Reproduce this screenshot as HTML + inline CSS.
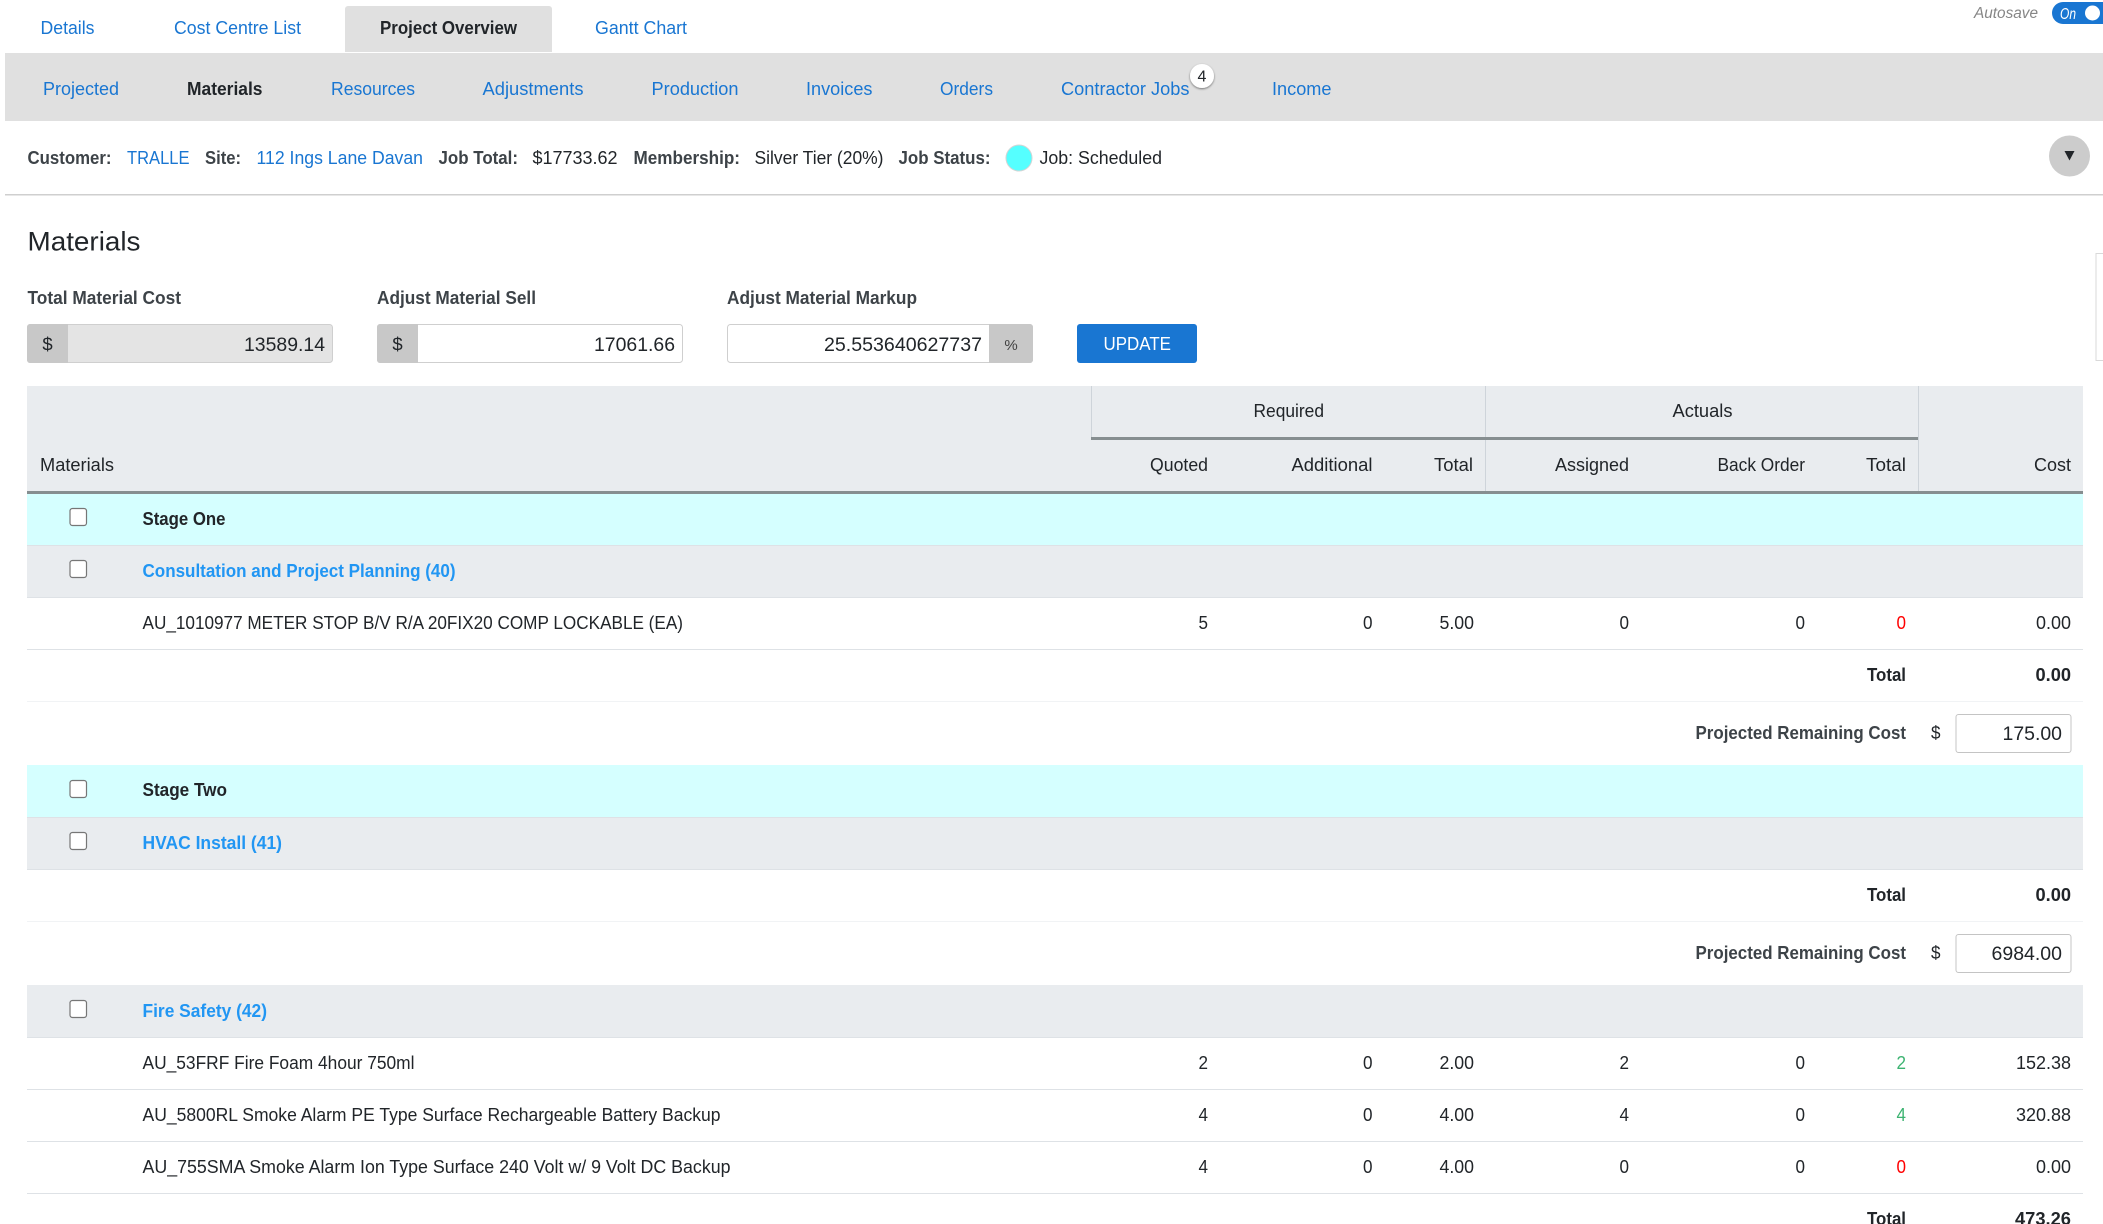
<!DOCTYPE html>
<html lang="en">
<head>
<meta charset="utf-8">
<title>Materials</title>
<style>
html,body{margin:0;padding:0;width:2103px;height:1224px;overflow:hidden;background:#fff}
svg{display:block}
text{font-family:"Liberation Sans",Arial,sans-serif;font-size:18.5px;fill:#212529}
.l{fill:#1976d2}
.g{fill:#2196f3;font-weight:bold}
.b{font-weight:bold}
.m{font-weight:bold;fill:#3d4348}
.e{text-anchor:end}
.c{text-anchor:middle}
</style>
</head>
<body>
<svg xmlns="http://www.w3.org/2000/svg" width="2103" height="1224" viewBox="0 0 2103 1224">
<defs>
<filter id="sh" x="-30%" y="-30%" width="160%" height="170%"><feDropShadow dx="0" dy="1" stdDeviation="1" flood-color="#000" flood-opacity=".5"/></filter>
</defs>
<!-- top tabs -->
<path d="M345 52V9a3 3 0 0 1 3-3h201a3 3 0 0 1 3 3v43z" fill="#e0e0e0"/>
<text x="40.5" y="34" class="l" textLength="54" lengthAdjust="spacingAndGlyphs">Details</text>
<text x="174" y="34" class="l" textLength="127" lengthAdjust="spacingAndGlyphs">Cost Centre List</text>
<text x="380" y="34" class="b" fill="#111" textLength="137" lengthAdjust="spacingAndGlyphs">Project Overview</text>
<text x="595" y="34" class="l" textLength="92" lengthAdjust="spacingAndGlyphs">Gantt Chart</text>
<!-- autosave -->
<text x="1974" y="18" style="font-size:15.5px;font-style:italic;fill:#868686" textLength="64" lengthAdjust="spacingAndGlyphs">Autosave</text>
<rect x="2052" y="2" width="70" height="22" rx="11" fill="#1976d2"/>
<text x="2060" y="19" style="font-size:16px;font-style:italic;fill:#fff" textLength="16" lengthAdjust="spacingAndGlyphs">On</text>
<circle cx="2092.5" cy="13" r="7.5" fill="#fff"/>
<!-- sub nav -->
<rect x="5" y="53" width="2098" height="68" fill="#e0e0e0"/>
<text x="43" y="95" class="l" textLength="76" lengthAdjust="spacingAndGlyphs">Projected</text>
<text x="187" y="95" class="b" textLength="75.5" lengthAdjust="spacingAndGlyphs">Materials</text>
<text x="331" y="95" class="l" textLength="84" lengthAdjust="spacingAndGlyphs">Resources</text>
<text x="482.5" y="95" class="l" textLength="101" lengthAdjust="spacingAndGlyphs">Adjustments</text>
<text x="651.5" y="95" class="l" textLength="87" lengthAdjust="spacingAndGlyphs">Production</text>
<text x="806" y="95" class="l" textLength="66.5" lengthAdjust="spacingAndGlyphs">Invoices</text>
<text x="940" y="95" class="l" textLength="53" lengthAdjust="spacingAndGlyphs">Orders</text>
<text x="1061" y="95" class="l" textLength="128.5" lengthAdjust="spacingAndGlyphs">Contractor Jobs</text>
<circle cx="1202" cy="76" r="12" fill="#fff" filter="url(#sh)"/>
<text x="1202" y="81.5" class="c" style="font-size:16px">4</text>
<text x="1272" y="95" class="l" textLength="59.5" lengthAdjust="spacingAndGlyphs">Income</text>
<!-- info line -->
<text x="27.5" y="164" class="m" textLength="84" lengthAdjust="spacingAndGlyphs">Customer:</text>
<text x="127" y="164" class="l" textLength="62.5" lengthAdjust="spacingAndGlyphs">TRALLE</text>
<text x="205" y="164" class="m" textLength="36" lengthAdjust="spacingAndGlyphs">Site:</text>
<text x="256.5" y="164" class="l" textLength="166.5" lengthAdjust="spacingAndGlyphs">112 Ings Lane Davan</text>
<text x="438.5" y="164" class="m" textLength="79.5" lengthAdjust="spacingAndGlyphs">Job Total:</text>
<text x="532.5" y="164" textLength="85" lengthAdjust="spacingAndGlyphs">$17733.62</text>
<text x="633.5" y="164" class="m" textLength="106.5" lengthAdjust="spacingAndGlyphs">Membership:</text>
<text x="754.5" y="164" textLength="129" lengthAdjust="spacingAndGlyphs">Silver Tier (20%)</text>
<text x="898.5" y="164" class="m" textLength="92" lengthAdjust="spacingAndGlyphs">Job Status:</text>
<circle cx="1019" cy="158" r="13" fill="#55ffff" stroke="#d4d4d4" stroke-width="1"/>
<text x="1039.5" y="164" textLength="122.5" lengthAdjust="spacingAndGlyphs">Job: Scheduled</text>
<circle cx="2069.5" cy="156" r="20.5" fill="#cccccc"/>
<path d="M2064.5 151h10l-5 9.5z" fill="#212529"/>
<rect x="5" y="194" width="2098" height="1.5" fill="#cfcfcf"/>
<!-- title -->
<text x="27.5" y="250.5" style="font-size:26.5px" textLength="113" lengthAdjust="spacingAndGlyphs">Materials</text>
<!-- right box -->
<rect x="2096" y="253.5" width="12" height="107" fill="#fff" stroke="#d9d9d9"/>
<!-- labels -->
<text x="27.5" y="304" class="m" textLength="153.5" lengthAdjust="spacingAndGlyphs">Total Material Cost</text>
<text x="377" y="304" class="m" textLength="159" lengthAdjust="spacingAndGlyphs">Adjust Material Sell</text>
<text x="727" y="304" class="m" textLength="190" lengthAdjust="spacingAndGlyphs">Adjust Material Markup</text>
<!-- inputs -->
<rect x="27.5" y="324.5" width="305" height="38" rx="3" fill="#e4e4e4" stroke="#cfcfcf"/>
<path d="M68 324H30a3 3 0 0 0-3 3v33a3 3 0 0 0 3 3h38z" fill="#c8c8c8"/>
<text x="47.5" y="350.5" class="c">$</text>
<text x="325" y="351" class="e" style="font-size:19px" textLength="81" lengthAdjust="spacingAndGlyphs">13589.14</text>
<rect x="377.5" y="324.5" width="305" height="38" rx="3" fill="#fff" stroke="#cfcfcf"/>
<path d="M418 324H380a3 3 0 0 0-3 3v33a3 3 0 0 0 3 3h38z" fill="#c8c8c8"/>
<text x="397.5" y="350.5" class="c">$</text>
<text x="675" y="351" class="e" style="font-size:19px" textLength="81" lengthAdjust="spacingAndGlyphs">17061.66</text>
<rect x="727.5" y="324.5" width="305" height="38" rx="3" fill="#fff" stroke="#cfcfcf"/>
<path d="M989 324h41a3 3 0 0 1 3 3v33a3 3 0 0 1-3 3h-41z" fill="#c8c8c8"/>
<text x="1011" y="350" class="c" style="font-size:15px;fill:#444">%</text>
<text x="982" y="351" class="e" style="font-size:19px" textLength="158" lengthAdjust="spacingAndGlyphs">25.553640627737</text>
<rect x="1077" y="324" width="120" height="39" rx="3" fill="#1976d2"/>
<text x="1103.5" y="350" style="fill:#fff;font-size:18px" textLength="67.5" lengthAdjust="spacingAndGlyphs">UPDATE</text>
<!-- table header -->
<rect x="27" y="386" width="2056" height="105" fill="#e9ecef"/>
<rect x="1091" y="386" width="1" height="51" fill="#ced4da"/>
<rect x="1485" y="386" width="1" height="105" fill="#ced4da"/>
<rect x="1918" y="386" width="1" height="105" fill="#ced4da"/>
<rect x="1091" y="437" width="827" height="3" fill="#868e90"/>
<rect x="27" y="491" width="2056" height="3" fill="#868e90"/>
<text x="1253.5" y="417" textLength="70.5" lengthAdjust="spacingAndGlyphs">Required</text>
<text x="1672.5" y="417" textLength="60" lengthAdjust="spacingAndGlyphs">Actuals</text>
<text x="40" y="471" textLength="74" lengthAdjust="spacingAndGlyphs">Materials</text>
<text x="1208" y="471" class="e" textLength="58" lengthAdjust="spacingAndGlyphs">Quoted</text>
<text x="1372.5" y="471" class="e" textLength="81" lengthAdjust="spacingAndGlyphs">Additional</text>
<text x="1473" y="471" class="e" textLength="39" lengthAdjust="spacingAndGlyphs">Total</text>
<text x="1629" y="471" class="e" textLength="74" lengthAdjust="spacingAndGlyphs">Assigned</text>
<text x="1805" y="471" class="e" textLength="87.5" lengthAdjust="spacingAndGlyphs">Back Order</text>
<text x="1906" y="471" class="e" textLength="40" lengthAdjust="spacingAndGlyphs">Total</text>
<text x="2071" y="471" class="e" textLength="37" lengthAdjust="spacingAndGlyphs">Cost</text>
<!-- row backgrounds -->
<rect x="27" y="494" width="2056" height="51" fill="#d5ffff"/>
<rect x="27" y="545" width="2056" height="1" fill="#dee2e6"/>
<rect x="27" y="546" width="2056" height="51" fill="#e9ecef"/>
<rect x="27" y="597" width="2056" height="1" fill="#dee2e6"/>
<rect x="27" y="649" width="2056" height="1" fill="#dee2e6"/>
<rect x="27" y="701" width="2056" height="1" fill="#f1f3f5"/>
<rect x="27" y="765" width="2056" height="52" fill="#d5ffff"/>
<rect x="27" y="817" width="2056" height="1" fill="#dee2e6"/>
<rect x="27" y="818" width="2056" height="51" fill="#e9ecef"/>
<rect x="27" y="869" width="2056" height="1" fill="#dee2e6"/>
<rect x="27" y="921" width="2056" height="1" fill="#f1f3f5"/>
<rect x="27" y="985" width="2056" height="52" fill="#e9ecef"/>
<rect x="27" y="1037" width="2056" height="1" fill="#dee2e6"/>
<rect x="27" y="1089" width="2056" height="1" fill="#dee2e6"/>
<rect x="27" y="1141" width="2056" height="1" fill="#dee2e6"/>
<rect x="27" y="1193" width="2056" height="1" fill="#dee2e6"/>
<!-- checkboxes -->
<g fill="#fff" stroke="#767676" stroke-width="1.2">
<rect x="70" y="508.5" width="16.5" height="17" rx="2.5"/>
<rect x="70" y="560.5" width="16.5" height="17" rx="2.5"/>
<rect x="70" y="780.5" width="16.5" height="17" rx="2.5"/>
<rect x="70" y="832.5" width="16.5" height="17" rx="2.5"/>
<rect x="70" y="1000.5" width="16.5" height="17" rx="2.5"/>
</g>
<!-- row labels -->
<text x="142.5" y="525" class="b" textLength="83" lengthAdjust="spacingAndGlyphs">Stage One</text>
<text x="142.5" y="577" class="g" textLength="313" lengthAdjust="spacingAndGlyphs">Consultation and Project Planning (40)</text>
<text x="142.5" y="629" textLength="540.5" lengthAdjust="spacingAndGlyphs">AU_1010977 METER STOP B/V R/A 20FIX20 COMP LOCKABLE (EA)</text>
<text x="142.5" y="796" class="b" textLength="84.5" lengthAdjust="spacingAndGlyphs">Stage Two</text>
<text x="142.5" y="849" class="g" textLength="139.5" lengthAdjust="spacingAndGlyphs">HVAC Install (41)</text>
<text x="142.5" y="1017" class="g" textLength="124.5" lengthAdjust="spacingAndGlyphs">Fire Safety (42)</text>
<text x="142.5" y="1069" textLength="272" lengthAdjust="spacingAndGlyphs">AU_53FRF Fire Foam 4hour 750ml</text>
<text x="142.5" y="1121" textLength="578" lengthAdjust="spacingAndGlyphs">AU_5800RL Smoke Alarm PE Type Surface Rechargeable Battery Backup</text>
<text x="142.5" y="1173" textLength="588" lengthAdjust="spacingAndGlyphs">AU_755SMA Smoke Alarm Ion Type Surface 240 Volt w/ 9 Volt DC Backup</text>
<!-- numbers -->
<g>
<text x="1208" y="629" class="e" textLength="9.5" lengthAdjust="spacingAndGlyphs">5</text>
<text x="1372.5" y="629" class="e" textLength="9.5" lengthAdjust="spacingAndGlyphs">0</text>
<text x="1474" y="629" class="e" textLength="34.5" lengthAdjust="spacingAndGlyphs">5.00</text>
<text x="1629" y="629" class="e" textLength="9.5" lengthAdjust="spacingAndGlyphs">0</text>
<text x="1805" y="629" class="e" textLength="9.5" lengthAdjust="spacingAndGlyphs">0</text>
<text x="1906" y="629" class="e" style="fill:#f00" textLength="9.5" lengthAdjust="spacingAndGlyphs">0</text>
<text x="2071" y="629" class="e" textLength="35" lengthAdjust="spacingAndGlyphs">0.00</text>
<text x="1906" y="681" class="e b" textLength="39" lengthAdjust="spacingAndGlyphs">Total</text>
<text x="2071" y="681" class="e b" textLength="35.5" lengthAdjust="spacingAndGlyphs">0.00</text>
<text x="1906" y="739" class="e m" textLength="210.5" lengthAdjust="spacingAndGlyphs">Projected Remaining Cost</text>
<text x="1940.5" y="739" class="e" textLength="9.5" lengthAdjust="spacingAndGlyphs">$</text>
<text x="2062" y="740" class="e" style="font-size:19px" textLength="59.5" lengthAdjust="spacingAndGlyphs">175.00</text>
<text x="1906" y="901" class="e b" textLength="39" lengthAdjust="spacingAndGlyphs">Total</text>
<text x="2071" y="901" class="e b" textLength="35.5" lengthAdjust="spacingAndGlyphs">0.00</text>
<text x="1906" y="959" class="e m" textLength="210.5" lengthAdjust="spacingAndGlyphs">Projected Remaining Cost</text>
<text x="1940.5" y="959" class="e" textLength="9.5" lengthAdjust="spacingAndGlyphs">$</text>
<text x="2062" y="960" class="e" style="font-size:19px" textLength="70.5" lengthAdjust="spacingAndGlyphs">6984.00</text>
<text x="1208" y="1069" class="e" textLength="9.5" lengthAdjust="spacingAndGlyphs">2</text>
<text x="1372.5" y="1069" class="e" textLength="9.5" lengthAdjust="spacingAndGlyphs">0</text>
<text x="1474" y="1069" class="e" textLength="34.5" lengthAdjust="spacingAndGlyphs">2.00</text>
<text x="1629" y="1069" class="e" textLength="9.5" lengthAdjust="spacingAndGlyphs">2</text>
<text x="1805" y="1069" class="e" textLength="9.5" lengthAdjust="spacingAndGlyphs">0</text>
<text x="1906" y="1069" class="e" style="fill:#3cb371" textLength="9.5" lengthAdjust="spacingAndGlyphs">2</text>
<text x="2071" y="1069" class="e" textLength="55" lengthAdjust="spacingAndGlyphs">152.38</text>
<text x="1208" y="1121" class="e" textLength="9.5" lengthAdjust="spacingAndGlyphs">4</text>
<text x="1372.5" y="1121" class="e" textLength="9.5" lengthAdjust="spacingAndGlyphs">0</text>
<text x="1474" y="1121" class="e" textLength="34.5" lengthAdjust="spacingAndGlyphs">4.00</text>
<text x="1629" y="1121" class="e" textLength="9.5" lengthAdjust="spacingAndGlyphs">4</text>
<text x="1805" y="1121" class="e" textLength="9.5" lengthAdjust="spacingAndGlyphs">0</text>
<text x="1906" y="1121" class="e" style="fill:#3cb371" textLength="9.5" lengthAdjust="spacingAndGlyphs">4</text>
<text x="2071" y="1121" class="e" textLength="55" lengthAdjust="spacingAndGlyphs">320.88</text>
<text x="1208" y="1173" class="e" textLength="9.5" lengthAdjust="spacingAndGlyphs">4</text>
<text x="1372.5" y="1173" class="e" textLength="9.5" lengthAdjust="spacingAndGlyphs">0</text>
<text x="1474" y="1173" class="e" textLength="34.5" lengthAdjust="spacingAndGlyphs">4.00</text>
<text x="1629" y="1173" class="e" textLength="9.5" lengthAdjust="spacingAndGlyphs">0</text>
<text x="1805" y="1173" class="e" textLength="9.5" lengthAdjust="spacingAndGlyphs">0</text>
<text x="1906" y="1173" class="e" style="fill:#f00" textLength="9.5" lengthAdjust="spacingAndGlyphs">0</text>
<text x="2071" y="1173" class="e" textLength="35" lengthAdjust="spacingAndGlyphs">0.00</text>
<text x="1906" y="1225" class="e b" textLength="39" lengthAdjust="spacingAndGlyphs">Total</text>
<text x="2071" y="1225" class="e b" textLength="56" lengthAdjust="spacingAndGlyphs">473.26</text>
</g>
<!-- projected inputs -->
<rect x="1956" y="714.5" width="115" height="38" rx="2.5" fill="none" stroke="#c4c4c4"/>
<rect x="1956" y="934.5" width="115" height="38" rx="2.5" fill="none" stroke="#c4c4c4"/>
</svg>
</body>
</html>
